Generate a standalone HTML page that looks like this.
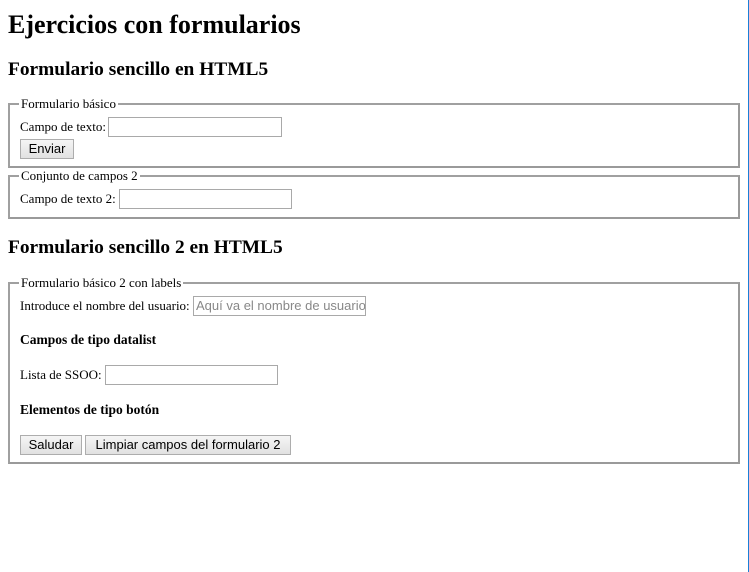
<!DOCTYPE html>
<html><head><meta charset="utf-8"><style>
body{margin:0;width:749px;height:572px;background:#fff;position:relative;overflow:hidden;font-family:"Liberation Serif",serif;font-size:13px;color:#000}
.a{position:absolute;white-space:nowrap}
h1,h2,h4{margin:0;position:absolute;white-space:nowrap;font-weight:bold}
h1{font-size:26px;left:8px;top:10px}
h2{font-size:19.4px;left:8px}
h4{font-size:13.5px;left:20px}
.fs{position:absolute;left:8px;width:728px;border:2px solid #a0a0a0;border-color:#a0a0a0 #9a9a9a #9a9a9a #a0a0a0}
.lg{position:absolute;background:#fff;padding:0 2px;font-size:13px;left:9px;top:-9px;white-space:nowrap}
.in{position:absolute;border:1px solid #a9a9a9;height:18px;box-sizing:border-box;background:#fff;font-family:"Liberation Sans",sans-serif;font-size:13px;color:#888;line-height:17px;padding-left:2px;overflow:hidden;white-space:nowrap}
.bt{position:absolute;border:1px solid #adadad;background:linear-gradient(#f5f5f5,#e1e1e1);font-family:"Liberation Sans",sans-serif;font-size:13px;height:20px;box-sizing:border-box;text-align:center;line-height:18px;white-space:nowrap}
</style></head><body>
<div style="position:absolute;left:748px;top:0;width:1px;height:572px;background:#1a7fd8"></div>
<h1>Ejercicios con formularios</h1>
<h2 style="top:59px">Formulario sencillo en HTML5</h2>
<div class="fs" style="top:103px;height:61px"><span class="lg">Formulario básico</span></div>
<span class="a" style="left:20px;top:119px">Campo de texto:</span>
<div class="in" style="left:108px;top:117px;width:174px;height:20px"></div>
<div class="bt" style="left:20px;top:139px;width:54px">Enviar</div>
<div class="fs" style="top:175px;height:40px"><span class="lg">Conjunto de campos 2</span></div>
<span class="a" style="left:20px;top:191px">Campo de texto 2:</span>
<div class="in" style="left:119px;top:189px;width:173px;height:20px"></div>
<h2 style="top:237px">Formulario sencillo 2 en HTML5</h2>
<div class="fs" style="top:282px;height:178px"><span class="lg">Formulario básico 2 con labels</span></div>
<span class="a" style="left:20px;top:298px">Introduce el nombre del usuario:</span>
<div class="in" style="left:193px;top:296px;width:173px;height:20px">Aquí va el nombre de usuario</div>
<h4 style="top:332px">Campos de tipo datalist</h4>
<span class="a" style="left:20px;top:367px">Lista de SSOO:</span>
<div class="in" style="left:105px;top:365px;width:173px;height:20px"></div>
<h4 style="top:402px">Elementos de tipo botón</h4>
<div class="bt" style="left:20px;top:435px;width:62px">Saludar</div>
<div class="bt" style="left:85px;top:435px;width:206px">Limpiar campos del formulario 2</div>
</body></html>
